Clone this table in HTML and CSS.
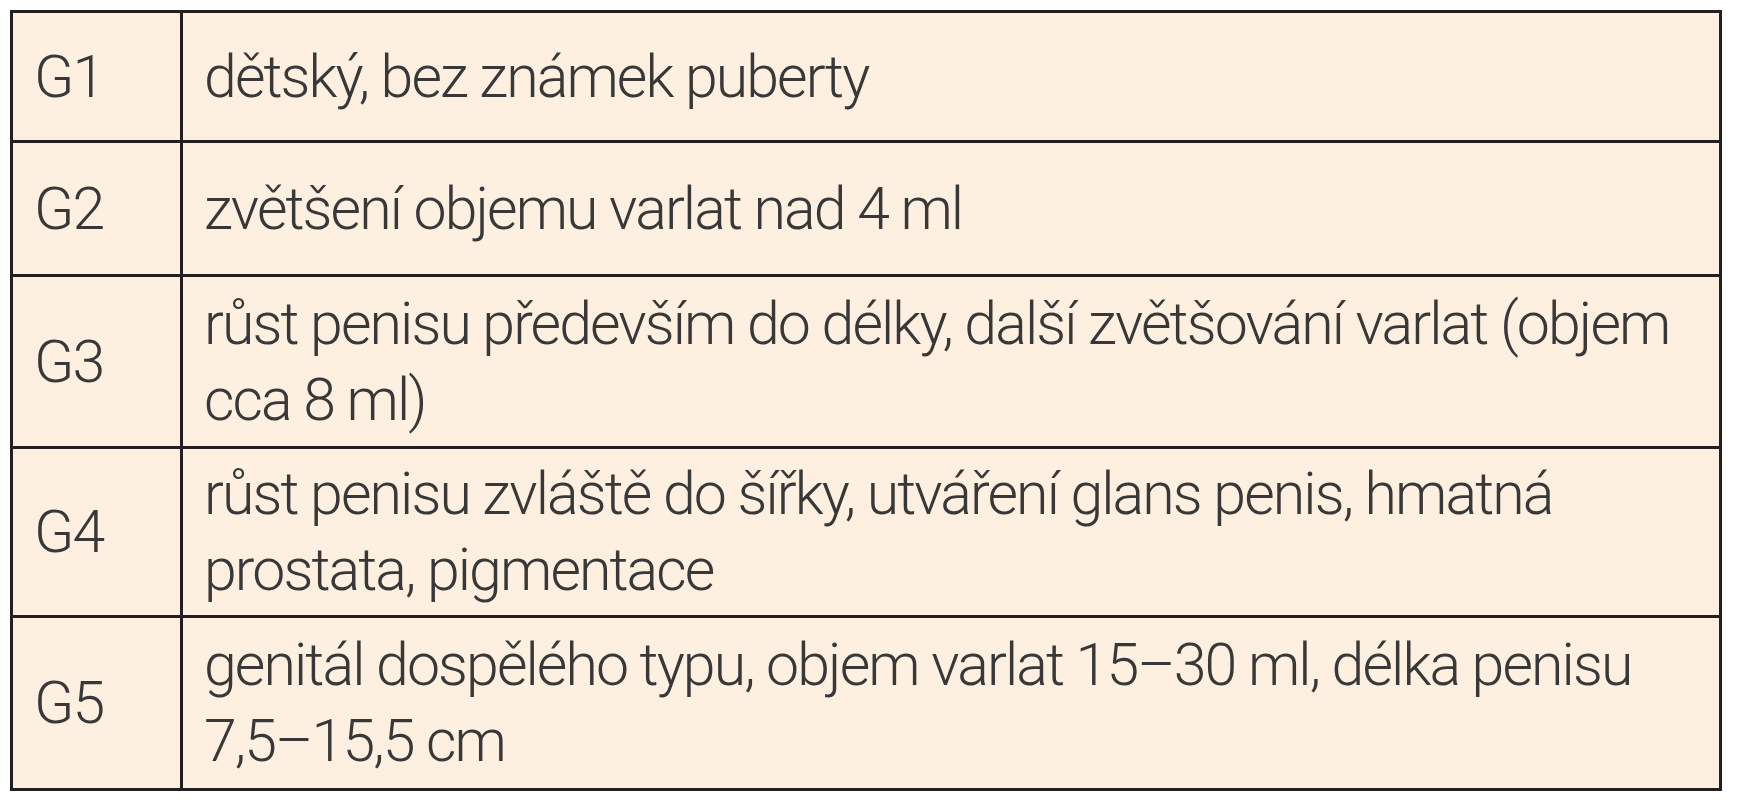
FILE: index.html
```html
<!DOCTYPE html>
<html lang="cs">
<head>
<meta charset="utf-8">
<title>Tanner G</title>
<link rel="stylesheet" href="styles.css">
</head>
<body>
<div class="table">
  <div class="cell stage r1">G1</div>
  <div class="cell desc r1">dětský, bez známek puberty</div>
  <div class="cell stage r2">G2</div>
  <div class="cell desc r2">zvětšení objemu varlat nad 4 ml</div>
  <div class="cell stage r3">G3</div>
  <div class="cell desc r3">růst penisu především do délky, další zvětšování varlat (objem<br>cca 8 ml)</div>
  <div class="cell stage r4">G4</div>
  <div class="cell desc r4">růst penisu zvláště do šířky, utváření glans penis, hmatná<br>prostata, pigmentace</div>
  <div class="cell stage r5">G5</div>
  <div class="cell desc r5">genitál dospělého typu, objem varlat 15–30 ml, délka penisu<br>7,5–15,5 cm</div>
</div>
</body>
</html>
```
FILE: styles.css
```css
html, body {
  margin: 0;
  padding: 0;
  background: #ffffff;
}
body {
  padding: 10px;
}
.table {
  display: grid;
  grid-template-columns: 170px 1539px;
  grid-template-rows: 130px 134px 172px 169px 173px;
  width: 1709px;
  border-left: 3px solid #231f20;
  border-top: 3px solid #231f20;
  background: #fdf0e1;
  font-family: "Roboto", "Noto Sans", sans-serif;
  font-weight: 300;
  font-size: 59px;
  letter-spacing: -1.9px;
  line-height: 76px;
  color: #383838;
}
.cell {
  display: flex;
  align-items: center;
  border-right: 3px solid #231f20;
  border-bottom: 3px solid #231f20;
  padding-left: 21px;
  box-sizing: border-box;
  white-space: nowrap;
}
```
